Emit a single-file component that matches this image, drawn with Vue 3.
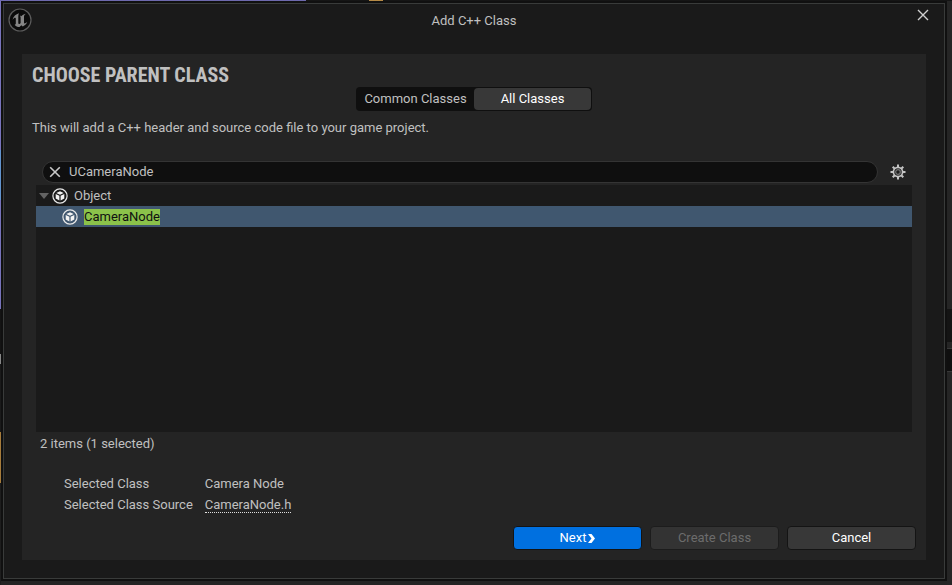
<script setup>
import { ref } from 'vue'

const tabs = ['Common Classes', 'All Classes']
const activeTab = ref('All Classes')
const query = ref('UCameraNode')
const selected = ref('CameraNode')
const rows = [
  { name: 'Object', level: 1, match: false },
  { name: 'CameraNode', level: 2, match: true },
]
</script>

<template>
  <div class="desktop">
    <main class="window">
      <header class="titlebar">
        <svg class="logo" viewBox="0 0 24 24" aria-hidden="true">
          <circle cx="12" cy="12" r="11" fill="#0b0b0b" stroke="#5c5c5c" stroke-width="1.2" />
          <path fill="#858585" d="M11 5.2C8 6 5.2 8.500 4.500 11.800C5.500 10.200 6.600 9.600 7.200 9.700C7.700 9.800 7.800 10.200 7.800 10.800V15.600C7.800 16.700 7.200 16.800 6.600 16.700C7.700 18.300 9.500 19 11.500 19.100L13.300 17.300L14.800 18.500C17 17.600 18.700 15.800 19.300 13.800C18.200 15 17.200 15.600 16.500 15.500C16.100 15.400 16 15 16 14.500V8.500C16 7.500 16.800 6.500 17.700 5.700C15.800 6 14.200 7.200 13.300 8.300C12.900 7.900 12.500 7.800 11.900 7.800C12.400 8.200 12.600 8.600 12.600 9.400V15.100C12.200 15.700 11.800 16 11.300 16C10.700 16 10.300 15.600 10.300 14.800V8.600C10.300 7.100 10.500 6 11 5.200Z" />
        </svg>
        <h1 class="title">Add C++ Class</h1>
        <button class="icon-button close" type="button" aria-label="Close">
          <svg width="12" height="12" viewBox="0 0 12 12"><path d="M1 1L11 11M11 1L1 11" stroke="#d0d0d0" stroke-width="1.400" /></svg>
        </button>
      </header>

      <section class="panel">
        <h2 class="heading">CHOOSE PARENT CLASS</h2>
        <div class="tabs" role="tablist">
          <button
            v-for="tab in tabs"
            :key="tab"
            class="tab"
            :class="{ active: tab === activeTab }"
            type="button"
            role="tab"
            :aria-selected="tab === activeTab"
            @click="activeTab = tab"
          >{{ tab }}</button>
        </div>
        <p class="description">This will add a C++ header and source code file to your game project.</p>

        <div class="search-row">
          <div class="search">
            <button class="icon-button" type="button" aria-label="Clear search" @click="query = ''">
              <svg width="12" height="12" viewBox="0 0 12 12"><path d="M1.200 1.200L10.800 10.800M10.800 1.200L1.200 10.800" stroke="#c8c8c8" stroke-width="1.600" /></svg>
            </button>
            <input v-model="query" class="search-input" type="text" aria-label="Search classes" spellcheck="false" />
          </div>
          <button class="icon-button" type="button" aria-label="View options">
            <svg width="16" height="16" viewBox="0 0 16 16">
              <g stroke="#c4c4c4" stroke-width="2">
                <path d="M8 0.500V3.500M8 12.500V15.500M0.500 8H3.500M12.500 8H15.500M2.700 2.700L4.800 4.800M11.200 11.200L13.300 13.300M2.700 13.300L4.800 11.200M11.200 4.800L13.300 2.700" />
              </g>
              <circle cx="8" cy="8" r="4.600" fill="#242424" stroke="#c4c4c4" stroke-width="1.700" />
              <circle cx="8" cy="8" r="2.300" fill="#1c1c1c" stroke="#747474" stroke-width="1.200" />
            </svg>
          </button>
        </div>

        <ul class="tree" role="tree" aria-label="Classes">
          <li
            v-for="row in rows"
            :key="row.name"
            class="row"
            :class="{ selected: row.name === selected, child: row.level > 1 }"
            role="treeitem"
            :aria-level="row.level"
            :aria-selected="row.name === selected"
            @click="selected = row.name"
          >
            <svg v-if="row.level === 1" class="arrow" width="10" height="6" viewBox="0 0 10 6" aria-hidden="true"><path d="M0 0H10L5 6Z" fill="#636363" /></svg>
            <svg width="16" height="16" viewBox="0 0 16 16" aria-hidden="true">
              <circle cx="8" cy="8" r="7.100" fill="none" stroke="#e8e8e8" stroke-width="1.200" />
              <path d="M8 3.200L11.700 4.900L8 6.700L4.300 4.900ZM3.700 6L7.400 7.800V12.400L3.700 10.500ZM12.300 6L8.600 7.800V12.400L12.300 10.500Z" fill="#f4f4f4" />
            </svg>
            <mark v-if="row.match" class="name">{{ row.name }}</mark>
            <span v-else class="name">{{ row.name }}</span>
          </li>
        </ul>
        <p class="count">2 items (1 selected)</p>

        <dl class="details">
          <dt>Selected Class</dt>
          <dd>Camera Node</dd>
          <dt>Selected Class Source</dt>
          <dd><a class="source" href="#">CameraNode.h</a></dd>
        </dl>

        <footer class="actions">
          <button class="button primary" type="button">
            Next
            <svg width="7" height="9" viewBox="0 0 7 9" aria-hidden="true"><path d="M0 0H3.500L7 4.500L3.500 9H0L3.500 4.500Z" fill="#fff" /></svg>
          </button>
          <button class="button" type="button" disabled>Create Class</button>
          <button class="button" type="button">Cancel</button>
        </footer>
      </section>
    </main>
  </div>
</template>

<style>
body {
  background: #242424;
}
</style>

<style scoped>
.desktop {
  display: flex;
  box-sizing: border-box;
  min-height: 100vh;
  padding: 1px 5px 4px 1px;
  font: 13px/16px Roboto, "Liberation Sans", sans-serif;
  color: #c0c0c0;
  background:
    linear-gradient(90deg, #6d69ad 306px, #151515 306px 369px, #b58a46 369px 383px, #151515 383px) 0 0 / 100% 1px no-repeat,
    linear-gradient(#7974bd 150px, #6294cf 150px 200px, #7773bb 200px 309px, #141414 309px 354px, #888 354px 364px, #1a1a1a 364px 432px, #a77c3b 432px 483px, #1d1d1d 483px) 0 0 / 1px 100% no-repeat,
    linear-gradient(#252525 309px, #141414 309px 342px, #252525 342px 348px, #383838 348px 349px, #0f0f0f 349px 371px, #383838 371px 372px, #252525 372px) 100% 0 / 5px 100% no-repeat,
    #242424;
}

.window {
  display: flex;
  flex: 1;
  flex-direction: column;
  margin: 2px;
  padding: 0 18px 18px;
  border: 1px solid #393b3a;
  outline: 2px solid #101010;
  background: #1a1a1a;
}

.titlebar {
  display: grid;
  grid-template-columns: 1fr auto 1fr;
  align-items: start;
  height: 50px;
  margin: 0 -14px;
}

.logo {
  width: 24px;
  height: 24px;
  margin-top: 4px;
}

.title {
  margin: 9px 0 0;
  font-size: 13px;
  font-weight: 400;
}

.icon-button {
  display: grid;
  place-items: center;
  width: 16px;
  height: 16px;
  padding: 0;
  border: 0;
  background: none;
}

.close {
  justify-self: end;
  margin: 3px 9px 0 0;
}

.panel {
  display: flex;
  flex: 1;
  flex-direction: column;
  padding: 10px;
  background: #242424;
}

.heading {
  margin: 0 0 1px;
  font: 700 20px/22px "Roboto Condensed", "Liberation Sans Narrow", Roboto, sans-serif;
}

.tabs {
  display: grid;
  grid-template-columns: 1fr 1fr;
  align-self: center;
  padding: 1px;
  border-radius: 4px;
  background: #0f0f0f;
}

.tab {
  width: 117px;
  height: 22px;
  padding: 0;
  border: 0;
  border-radius: 4px;
  font: inherit;
  color: inherit;
  background: none;
}

.tab.active {
  color: #fff;
  background: #383838;
}

.description {
  margin: 9px 0 25px;
}

.search-row {
  display: flex;
  align-items: center;
  gap: 12px;
  margin: 0 10px 2px;
}

.search {
  display: flex;
  flex: 1;
  align-items: center;
  box-sizing: border-box;
  height: 22px;
  padding: 0 4px;
  border: 1px solid #343434;
  border-radius: 11px;
  background: #0f0f0f;
}

.search-input {
  flex: 1;
  min-width: 0;
  padding: 0 0 0 6px;
  border: 0;
  outline: 0;
  font: inherit;
  color: inherit;
  background: none;
}

.tree {
  flex: 1;
  margin: 0 4px;
  padding: 0;
  list-style: none;
  background: #1a1a1a;
}

.row {
  display: flex;
  align-items: center;
  height: 21px;
  padding-left: 3px;
}

.row.child {
  padding-left: 26px;
}

.row.selected {
  background: #40576f;
}

.arrow {
  margin-right: 3px;
}

.name {
  margin-left: 6px;
}

mark {
  color: #101010;
  background: #8bc24a;
}

.count {
  margin: 4px 8px 24px;
}

.details {
  display: grid;
  grid-template-columns: max-content 1fr;
  gap: 5px 12px;
  margin: 0 32px 13px;
}

.details dd {
  margin: 0;
}

.source {
  display: inline-block;
  border-bottom: 1px dotted #e0e0e0;
  line-height: 14px;
  color: inherit;
  text-decoration: none;
}

.actions {
  display: flex;
  justify-content: flex-end;
  gap: 8px;
}

.button {
  display: flex;
  align-items: center;
  justify-content: center;
  gap: 2px;
  box-sizing: border-box;
  width: 129px;
  height: 24px;
  padding: 0;
  border: 1px solid #141414;
  border-radius: 4px;
  font: inherit;
  color: #fff;
  background: #383838;
}

.button.primary {
  background: #0070e0;
}

.button:disabled {
  border-color: #1c1c1c;
  color: #6c6c6c;
  background: #333;
}
</style>
